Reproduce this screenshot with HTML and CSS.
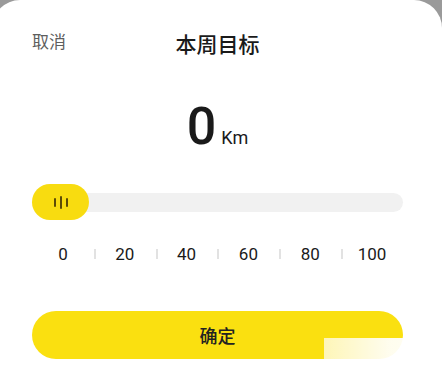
FILE: index.html
```html
<!DOCTYPE html>
<html lang="zh">
<head>
<meta charset="utf-8">
<title>本周目标</title>
<link rel="stylesheet" href="styles.css">
</head>
<body>
<div class="sheet">
  <header class="header">
    <span class="cancel">取消</span>
    <h1 class="title">本周目标</h1>
    <span></span>
  </header>
  <div class="value">
    <span class="num">0</span><span class="unit">Km</span>
  </div>
  <div class="slider">
    <div class="track"></div>
    <div class="thumb">
      <span class="bar short"></span><span class="bar long"></span><span class="bar short"></span>
    </div>
  </div>
  <div class="scale">
    <span class="mark first">0</span>
    <span class="mark">20</span>
    <span class="mark">40</span>
    <span class="mark">60</span>
    <span class="mark">80</span>
    <span class="mark">100</span>
  </div>
  <button class="confirm">确定</button>
</div>
<div class="watermark"></div>
</body>
</html>
```
FILE: styles.css
```css
html, body {
  margin: 0;
  padding: 0;
}
body {
  width: 442px;
  height: 387px;
  overflow: hidden;
  background: #9a9a9a;
  font-family: "Noto Sans", "Noto Sans CJK SC", sans-serif;
  position: relative;
}
.sheet {
  width: 450px;
  height: 387px;
  margin-left: -8px;
  box-sizing: border-box;
  padding: 0 39px 0 40px;
  background: #fff;
  border-radius: 28px 28px 0 0;
  display: flex;
  flex-direction: column;
}
.header {
  margin-top: 29px;
  height: 28px;
  display: grid;
  grid-template-columns: 1fr auto 1fr;
  align-items: center;
}
.cancel {
  font-size: 17px;
  color: #5e5e5e;
  line-height: 24px;
  margin-top: -4px;
  font-family: "Noto Sans CJK SC", sans-serif;
}
.title {
  margin: 0;
  font-size: 21px;
  font-weight: 500;
  line-height: 28px;
  color: #1a1a1a;
  font-family: "Noto Sans CJK SC", sans-serif;
}
.value {
  margin-top: 44px;
  height: 52px;
  display: flex;
  justify-content: center;
  align-items: baseline;
  font-family: Roboto, "Noto Sans", sans-serif;
  color: #1a1a1a;
}
.num {
  font-size: 52px;
  line-height: 52px;
  font-weight: 500;
}
.unit {
  font-size: 18px;
  margin-left: 5px;
}
.slider {
  margin-top: 31px;
  height: 36px;
  position: relative;
  display: flex;
  align-items: center;
}
.track {
  flex: 1;
  height: 19px;
  border-radius: 10px;
  background: #f1f1f1;
}
.thumb {
  position: absolute;
  left: 0;
  top: 0;
  width: 57px;
  height: 36px;
  border-radius: 18px;
  background: #f8dc10;
  display: flex;
  align-items: center;
  justify-content: center;
  gap: 4px;
}
.bar {
  width: 2px;
  border-radius: 1px;
  background: #5c4b06;
}
.bar.short { height: 9px; }
.bar.long { height: 13px; }
.scale {
  margin-top: 22px;
  display: flex;
  font-family: Roboto, "Noto Sans", sans-serif;
  font-size: 17px;
  line-height: 24px;
  color: #1a1a1a;
}
.mark {
  width: 62px;
  text-align: center;
  background: linear-gradient(#e2e2e2, #e2e2e2) left center / 2px 10px no-repeat;
}
.mark.first {
  background: none;
}
.confirm {
  margin-top: 45px;
  height: 48px;
  border: none;
  border-radius: 24px;
  background: #fae010;
  font-family: "Noto Sans CJK SC", sans-serif;
  font-size: 18px;
  font-weight: 500;
  color: #222;
  padding: 0;
}
.watermark {
  position: absolute;
  left: 324px;
  top: 338px;
  width: 118px;
  height: 49px;
  background: linear-gradient(to right, rgba(255,255,255,0.7), rgba(255,255,255,0.93) 55%, rgba(255,255,255,0.97));
}
```
